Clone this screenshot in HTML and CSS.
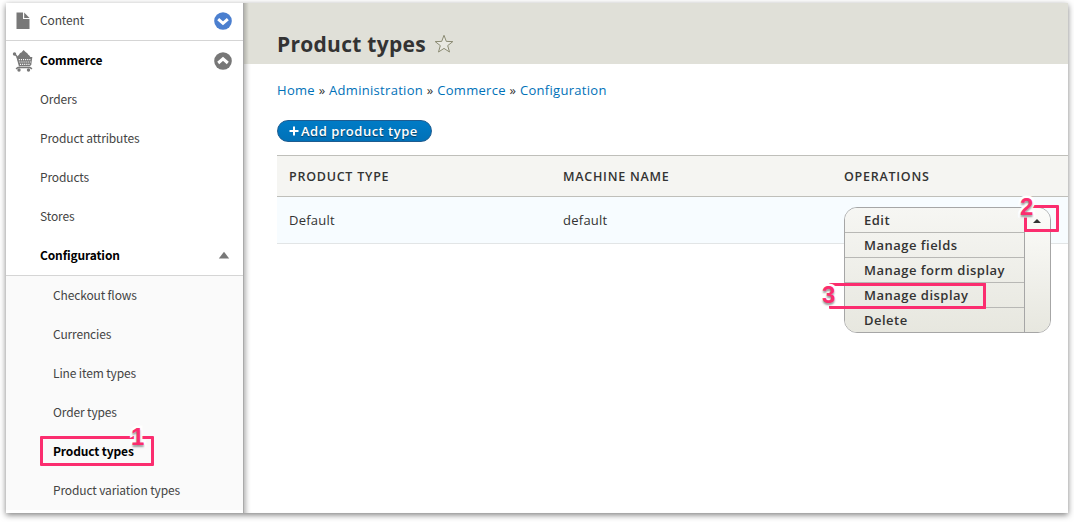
FILE: index.html
```html
<!DOCTYPE html>
<html lang="en">
<head>
<meta charset="utf-8">
<title>Product types</title>
<link rel="stylesheet" href="styles.css">
</head>
<body>
<div class="window">
  <nav class="tray">
    <a class="item item-content">
      <svg class="icon" width="22" height="22" viewBox="0 0 22 22"><path fill="#787878" d="M4.500 2.500h6.500v6.500h6.500v10h-13z"/><path fill="#787878" d="M12.200 2.500 17.500 8h-5.300z"/></svg>
      <span>Content</span>
      <svg class="toggle" width="18" height="18" viewBox="0 0 18 18"><circle cx="9" cy="9" r="8.8" fill="#4b7fcf"/><path d="m4.200 7.100 4.800 4.200 4.800-4.200" fill="none" stroke="#fff" stroke-width="3"/></svg>
    </a>
    <a class="item item-commerce">
      <svg class="icon" width="22" height="22" viewBox="0 0 22 22">
        <g fill="#787878"><circle cx="2.500" cy="4" r="1.700"/><path d="M5 7.500C5.500 5.200 7 5.600 7.600 3.800 8.200 2.600 9.300 3 10 1.800L11.600 0l1.700 1.800c.8 1 1.700.8 2.300 2 .8 1.500 2.200 1.500 3 3.700z"/><path d="M4.500 7H20.300l-1 7.700-1.500 1.500H8z"/><circle cx="7" cy="20" r="1.700"/><circle cx="16.500" cy="20" r="1.700"/></g>
        <path d="m3 4.200 2 2.300 2.700 9.700M4 18.800 6 17.600h12l2 1.200" fill="none" stroke="#787878" stroke-width="1.500"/>
        <path d="M6.800 9.600h12.500M7.300 12h11.500M8 14.400h10.300" stroke="#fff" stroke-width="1.100" stroke-dasharray="1.100 1"/>
      </svg>
      <span>Commerce</span>
      <svg class="toggle" width="18" height="18" viewBox="0 0 18 18"><circle cx="9" cy="9" r="8.800" fill="#777"/><path d="M4.200 11 9 6.800l4.800 4.200" fill="none" stroke="#fff" stroke-width="3"/></svg>
    </a>
    <a class="item sub"><span>Orders</span></a>
    <a class="item sub"><span>Product attributes</span></a>
    <a class="item sub"><span>Products</span></a>
    <a class="item sub"><span>Stores</span></a>
    <a class="item sub item-config"><span>Configuration</span>
      <svg class="arrow" width="12" height="8" viewBox="0 0 12 8"><path d="M.8 7.500 6 .8l5.200 6.700z" fill="#787878"/></svg></a>
    <div class="nested">
      <a class="item"><span>Checkout flows</span></a>
      <a class="item"><span>Currencies</span></a>
      <a class="item"><span>Line item types</span></a>
      <a class="item"><span>Order types</span></a>
      <a class="item active"><span>Product types</span></a>
      <a class="item"><span>Product variation types</span></a>
    </div>
  </nav>
  <main class="page">
    <header class="header">
      <h1 class="title">Product types</h1>
      <svg class="star" width="20" height="20" viewBox="0 0 20 20"><path d="m10 1.300 2.300 6.100 6.500.2-5.100 4 1.800 6.400L10 14.400 4.500 18l1.800-6.400-5.100-4 6.500-.2z" fill="#e9e9e2" stroke="#8b8b73" stroke-width="1"/></svg>
    </header>
    <div class="crumbs"><a>Home</a> » <a>Administration</a> » <a>Commerce</a> » <a>Configuration</a></div>
    <a class="add"><svg width="10" height="10" viewBox="0 0 10 10"><path d="M5 .5v9M.5 5h9" stroke="#fff" stroke-width="2"/></svg><span>Add product type</span></a>
    <div class="table">
      <div class="row head"><span>PRODUCT TYPE</span><span>MACHINE NAME</span><span>OPERATIONS</span></div>
      <div class="row"><span>Default</span><span>default</span><span></span></div>
    </div>
  </main>
</div>
<div class="ops">
  <div class="ops-list"><a>Edit</a><a>Manage fields</a><a>Manage form display</a><a>Manage display</a><a>Delete</a></div>
  <div class="ops-toggle"><svg width="8" height="4" viewBox="0 0 8 4"><path d="M0 4 4 0l4 4z" fill="#333"/></svg></div>
</div>
<div class="mark mark-1"></div>
<div class="mark mark-2"></div>
<div class="mark mark-3"></div>
<span class="num num-1">1</span>
<span class="num num-2">2</span>
<span class="num num-3">3</span>
</body>
</html>
```
FILE: styles.css
```css
* { box-sizing: border-box; }
body {
  margin: 0;
  width: 1074px;
  height: 522px;
  overflow: hidden;
  position: relative;
  background: #fff;
  color: #333;
  font-family: "Open Sans", "Noto Sans", sans-serif;
  font-size: 13px;
}
.window {
  display: flex;
  width: 1062px;
  height: 510px;
  margin: 3px 0 0 6px;
  background: #fff;
  box-shadow: 0 2px 6px rgba(0, 0, 0, .5);
}
.tray {
  flex: none;
  width: 238px;
  height: 510px;
  overflow: hidden;
  background: #fff;
  border-right: 1px solid #aaa;
  font-family: "Noto Sans CJK SC", sans-serif;
  font-size: 12px;
  letter-spacing: -.14px;
  color: #444;
}
.page { flex: 1; min-width: 0; box-shadow: inset 6px 0 5px -4px rgba(0, 0, 0, .3); }
.item {
  display: flex;
  align-items: center;
  height: 39px;
  line-height: 18px;
  white-space: nowrap;
}
.item span { padding-bottom: 2px; }
.icon { width: 22px; margin: 0 6px; }
.toggle { margin-left: auto; margin-right: 11px; }
.item-content { height: 38px; padding-bottom: 2px; border-bottom: 1px solid #d5d5d5; }
.item-commerce, .item-config, .active { color: #000; font-weight: 700; }
.sub { padding-left: 34px; }
.item-config { height: 40px; border-bottom: 1px solid #d5d5d5; }
.arrow { margin: 0 13px 2px auto; }
.nested { background: #fafafa; }
.nested .item { padding-left: 47px; }
.header {
  display: flex;
  align-items: center;
  height: 61px;
  padding: 20px 0 0 33px;
  background: linear-gradient(90deg, rgba(0, 0, 0, .2), rgba(0, 0, 0, 0) 5px), #e0e0d8;
}
.title { margin: 0; font-size: 21px; line-height: 28px; letter-spacing: .27px; }
.star { margin-left: 8px; }
.crumbs { padding: 16px 0 0 33px; line-height: 20px; letter-spacing: .3px; }
.crumbs a { color: #0071b8; }
.add {
  display: flex;
  align-items: center;
  gap: 2px;
  width: 155px;
  height: 22px;
  margin: 20px 0 0 33px;
  padding-left: 11px;
  border: 1px solid #1e5c90;
  border-radius: 11px;
  background: linear-gradient(#007bc6, #0071b8);
  color: #fff;
  font-weight: 600;
  letter-spacing: .5px;
  white-space: nowrap;
  text-shadow: 0 1px 1px rgba(0, 0, 0, .5);
}
.table { margin: 13px 0 0 33px; }
.row {
  display: grid;
  grid-template-columns: 274px 281px 1fr;
  align-items: center;
  height: 47px;
  padding-left: 12px;
  background: #f7fcff;
  border-bottom: 1px solid #e2e5e6;
  letter-spacing: .25px;
}
.head {
  height: 42px;
  background: #f5f5f2;
  border-top: 1px solid #bfbfba;
  border-bottom: 1px solid #bfbfba;
  font-size: 12.5px;
  font-weight: 600;
  letter-spacing: .75px;
}
.ops {
  position: absolute;
  left: 844px;
  top: 207px;
  display: flex;
  width: 207px;
  height: 126px;
  overflow: hidden;
  border: 1px solid #a6a6a6;
  border-radius: 13px;
}
.ops-list {
  width: 180px;
  border-right: 1px solid #a6a6a6;
  background: linear-gradient(#f6f6f3, #e7e7df);
  font-weight: 600;
  letter-spacing: .49px;
}
.ops-list a {
  display: block;
  height: 25px;
  padding-left: 19px;
  border-bottom: 1px solid #b8b8b5;
  line-height: 24px;
  white-space: nowrap;
}
.ops-list a:last-child { border-bottom: 0; }
.ops-toggle {
  flex: 1;
  padding: 10px 0 0 8px;
  background: linear-gradient(#fcfcfa, #e7e7df);
  line-height: 0;
}
.mark { position: absolute; border: 3px solid #fb2d6f; border-radius: 1px; }
.mark-1 { left: 40px; top: 436px; width: 114px; height: 30px; }
.mark-2 { left: 1024px; top: 205px; width: 35px; height: 27px; }
.mark-3 { left: 829px; top: 283px; width: 157px; height: 26px; border-left: 0; }
.num {
  position: absolute;
  color: #fb2d6f;
  font: 700 24px/24px "Liberation Sans", sans-serif;
  -webkit-text-stroke: 5px #fff;
  paint-order: stroke fill;
  text-shadow: 0 2px 2px rgba(0, 0, 0, .4);
}
.num-1 { left: 131px; top: 425px; }
.num-2 { left: 1020px; top: 195px; }
.num-3 { left: 822px; top: 283px; }
```
